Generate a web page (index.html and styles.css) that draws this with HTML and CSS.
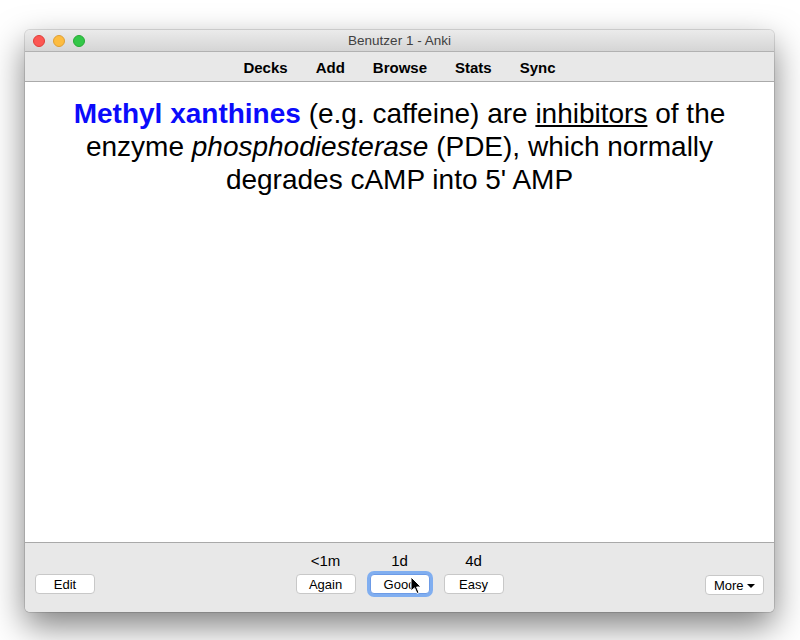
FILE: index.html
```html
<!DOCTYPE html>
<html>
<head>
<meta charset="utf-8">
<link rel="stylesheet" href="styles.css">
</head>
<body>
<div class="window">
  <div class="titlebar">
    <div class="lights">
      <span class="light red"></span>
      <span class="light yellow"></span>
      <span class="light green"></span>
    </div>
    <div class="title">Benutzer 1 - Anki</div>
  </div>
  <div class="toolbar">
    <span>Decks</span>
    <span>Add</span>
    <span>Browse</span>
    <span>Stats</span>
    <span>Sync</span>
  </div>
  <div class="content">
    <p class="card"><b class="hl">Methyl xanthines</b> (e.g. caffeine) are <u>inhibitors</u> of the enzyme <i>phosphodiesterase</i> (PDE), which normally degrades cAMP into 5' AMP</p>
  </div>
  <div class="bottombar">
    <div class="side left"><button class="btn btn-edit">Edit</button></div>
    <div class="answers">
      <div class="ans"><span class="due">&lt;1m</span><button class="btn">Again</button></div>
      <div class="ans"><span class="due">1d</span><button class="btn focus">Good</button></div>
      <div class="ans"><span class="due">4d</span><button class="btn">Easy</button></div>
    </div>
    <div class="side right"><button class="btn btn-more">More <span class="caret"></span></button></div>
  </div>
</div>
<svg class="cursor" width="12" height="19" viewBox="0 0 12 19"><path d="M1 1 L1 15 L4.5 11.8 L7 17.5 L9 16.6 L6.6 11 L11 11 Z" fill="#000" stroke="#fff" stroke-width="1"/></svg>
</body>
</html>
```
FILE: styles.css
```css
html, body { margin: 0; padding: 0; }
body {
  width: 800px; height: 640px; background: #ffffff; overflow: hidden;
  font-family: "Liberation Sans", Arial, sans-serif; position: relative;
}
.window {
  position: absolute; left: 25px; top: 30px; width: 749px; height: 582px;
  border-radius: 5px; overflow: hidden;
  box-shadow: 0 14px 34px rgba(0,0,0,0.5), 0 0 0 1px rgba(0,0,0,0.12);
  display: flex; flex-direction: column; background: #e8e8e8;
}
.titlebar {
  height: 21px; flex: none; position: relative;
  background: linear-gradient(#ebebeb, #d5d5d5);
  border-bottom: 1px solid #b1b1b1;
  display: flex; align-items: center; justify-content: center;
}
.lights { position: absolute; left: 8px; top: 5px; display: flex; gap: 8px; }
.light { width: 12px; height: 12px; border-radius: 50%; box-sizing: border-box; }
.red { background: #fc5753; border: 1px solid #df3d38; }
.yellow { background: #fdbc40; border: 1px solid #de9f34; }
.green { background: #33c748; border: 1px solid #27aa35; }
.title { font-size: 13.5px; color: #404040; }
.toolbar {
  height: 30px; flex: none; background: #e8e8e8; border-bottom: 1px solid #aaaaaa;
  display: flex; justify-content: center; align-items: center; gap: 0;
  font-weight: bold; font-size: 15px; color: #000; padding-top: 1px; box-sizing: border-box;
}
.toolbar span { padding: 0 14px; }
.content { flex: 1; background: #fff; padding: 15px 20px 0; }
.card {
  margin: 0; text-align: center; font-size: 28px; line-height: 33px; color: #000;
}
.hl { color: #0b0bfb; }
.bottombar {
  height: 70px; flex: none; background: #e8e8e8; border-top: 1px solid #a9a9a9;
  display: flex; align-items: flex-end; padding: 0 10px 18px; box-sizing: border-box;
  position: relative;
}
.side { flex: 1; display: flex; }
.side.right { justify-content: flex-end; }
.answers { display: flex; gap: 14px; align-items: flex-end; }
.ans { display: flex; flex-direction: column; align-items: center; gap: 5px; }
.due { font-size: 15px; color: #000; }
.btn {
  font-family: "Liberation Sans", Arial, sans-serif; font-size: 13px; color: #000;
  background: #fff; border: 1px solid #c8c8c8; border-radius: 4px;
  width: 60px; height: 20px; padding: 0; box-sizing: border-box;
}
.btn.focus { box-shadow: 0 0 0 3px #80aef0; border-color: #6d9be6; }
.btn-more { width: 59px; position: relative; top: 1px; }
.caret {
  display: inline-block; width: 0; height: 0; vertical-align: middle;
  border-left: 4px solid transparent; border-right: 4px solid transparent; border-top: 4px solid #000;
}
.cursor { position: absolute; left: 410px; top: 576px; }
```
